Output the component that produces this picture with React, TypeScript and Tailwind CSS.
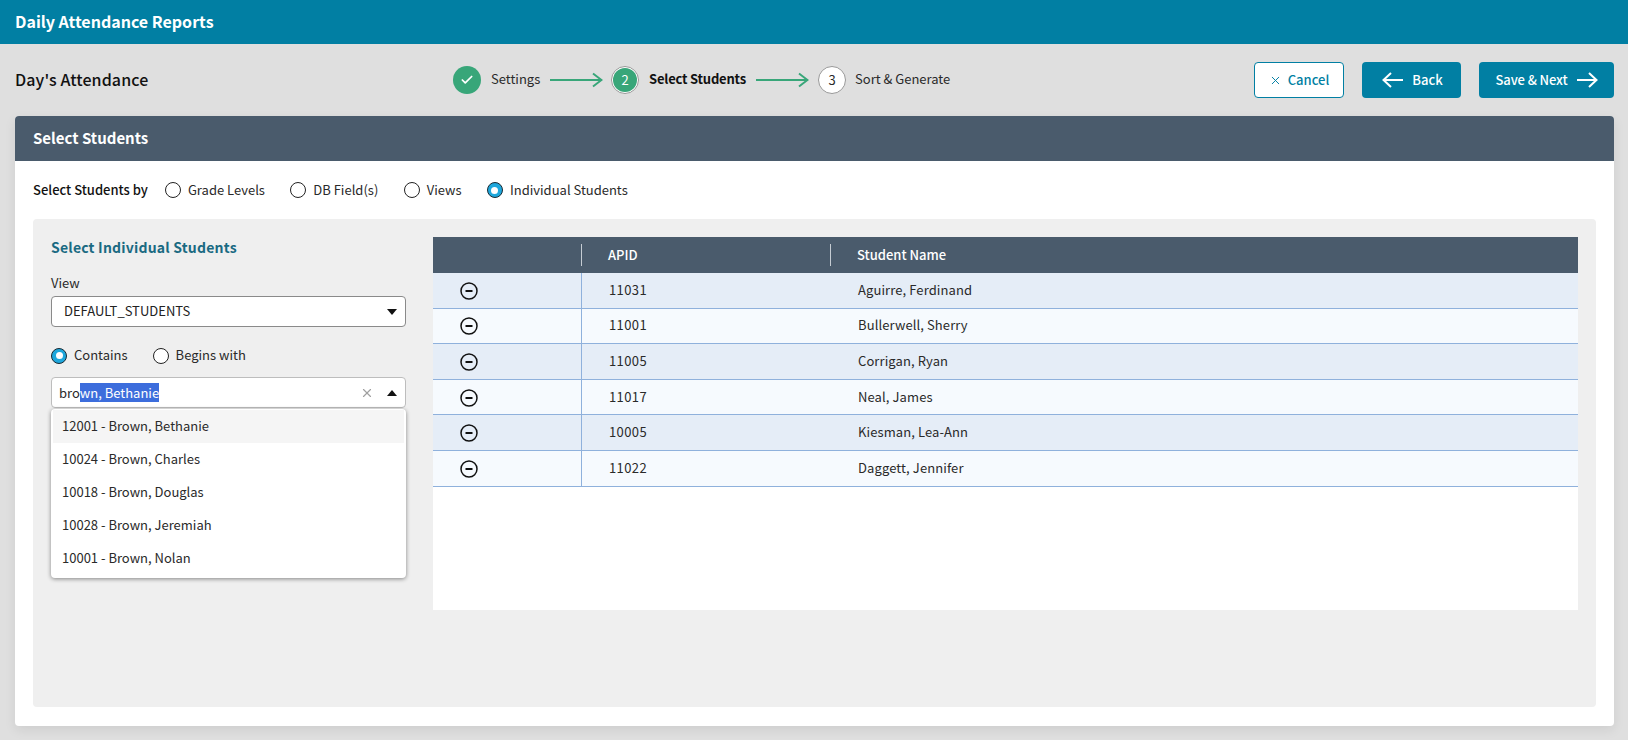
import { Check, X } from "lucide-react";

const FONT = "font-['Noto_Sans_CJK_SC','Source_Sans_Pro',sans-serif]";

const students = [
  { apid: "11031", name: "Aguirre, Ferdinand" },
  { apid: "11001", name: "Bullerwell, Sherry" },
  { apid: "11005", name: "Corrigan, Ryan" },
  { apid: "11017", name: "Neal, James" },
  { apid: "10005", name: "Kiesman, Lea-Ann" },
  { apid: "11022", name: "Daggett, Jennifer" },
];

const options = [
  "12001 - Brown, Bethanie",
  "10024 - Brown, Charles",
  "10018 - Brown, Douglas",
  "10028 - Brown, Jeremiah",
  "10001 - Brown, Nolan",
];

function Radio({ label, checked }: { label: string; checked?: boolean }) {
  return (
    <label className="flex items-center gap-[7px] text-[13px] leading-[20px] text-[#2a2a2a]">
      {checked ? (
        <span className="flex h-[16px] w-[16px] items-center justify-center rounded-full border-[1.5px] border-[#1a2a33] bg-[#1ea7dc]">
          <span className="h-[7px] w-[7px] rounded-full bg-white" />
        </span>
      ) : (
        <span className="h-[16px] w-[16px] rounded-full border-[1.5px] border-[#222] bg-white" />
      )}
      <span className="pb-[1px]">{label}</span>
    </label>
  );
}

function StepArrow() {
  return (
    <svg width="53" height="16" viewBox="0 0 53 16" fill="none" stroke="#38a679" strokeWidth="2" className="shrink-0">
      <path d="M0 8H51M43 1.5L51.5 8L43 14.5" />
    </svg>
  );
}

function BigArrow({ flip }: { flip?: boolean }) {
  return (
    <svg width="21" height="16" viewBox="0 0 21 16" fill="none" stroke="#fff" strokeWidth="2" className={`shrink-0 ${flip ? "rotate-180" : ""}`}>
      <path d="M0 8H19M12 1L19.5 8L12 15" />
    </svg>
  );
}

function RemoveIcon() {
  return (
    <svg width="18" height="18" viewBox="0 0 18 18" fill="none" stroke="#111" className="shrink-0">
      <circle cx="9" cy="9" r="8" strokeWidth="1.5" />
      <path d="M5.5 9H12.5" strokeWidth="2" />
    </svg>
  );
}

export default function App() {
  return (
    <div className={`${FONT} flex h-[740px] w-[1628px] flex-col overflow-hidden bg-[#dfdfdf] text-[13px]`}>
      <header className="flex h-[44px] shrink-0 items-center bg-[#017fa3] px-[15px] pb-[2px] text-[16px] leading-[24px] font-semibold text-white">
        Daily Attendance Reports
      </header>

      <div className="flex h-[72px] shrink-0 items-center pr-[14px] pl-[15px]">
        <h1 className="w-[438px] pb-[2px] text-[16px] leading-[24px] font-medium tracking-[0.1px] text-[#111]">Day's Attendance</h1>
        <div className="flex items-center text-[13px] leading-[20px]">
          <span className="flex h-[28px] w-[28px] items-center justify-center rounded-full bg-[#38a679] text-white">
            <Check size={14} strokeWidth={3} />
          </span>
          <span className="mr-[10px] ml-[10px] w-[49px] pb-[2px] text-[#2a2a2a]">Settings</span>
          <StepArrow />
          <span className="ml-[8px] flex h-[28px] w-[28px] items-center justify-center rounded-full border border-[#999] bg-white">
            <span className="flex h-[24px] w-[24px] items-center justify-center rounded-full bg-[#38a679] pb-[1px] text-white">2</span>
          </span>
          <span className="mr-[10px] ml-[10px] w-[97px] pb-[2px] font-semibold tracking-[-0.2px] whitespace-nowrap text-[#111]">Select Students</span>
          <StepArrow />
          <span className="ml-[9px] flex h-[28px] w-[28px] items-center justify-center rounded-full border border-[#999] bg-white pb-[1px] text-[#2a2a2a]">3</span>
          <span className="ml-[9px] pb-[2px] text-[#2a2a2a]">Sort &amp; Generate</span>
        </div>
        <div className="ml-auto flex items-center gap-[18px] text-[13px] leading-[20px] font-medium">
          <button className="flex h-[36px] w-[90px] items-center justify-center gap-[6px] rounded-[4px] border border-[#017fa3] bg-white text-[#017fa3]">
            <X size={13} strokeWidth={1.8} />
            <span className="pb-[1px]">Cancel</span>
          </button>
          <button className="flex h-[36px] w-[99px] items-center justify-center gap-[9px] rounded-[4px] bg-[#017fa3] pl-[2px] text-white">
            <BigArrow flip />
            <span className="pb-[1px]">Back</span>
          </button>
          <button className="flex h-[36px] w-[135px] items-center justify-center gap-[9px] rounded-[4px] bg-[#017fa3] text-white">
            <span className="pb-[1px] tracking-[-0.1px]">Save &amp; Next</span>
            <BigArrow />
          </button>
        </div>
      </div>

      <main className="mr-[14px] ml-[15px] flex h-[610px] flex-col rounded-[4px] bg-white shadow-[0_4px_12px_rgba(0,0,0,0.08)]">
        <div className="flex h-[45px] shrink-0 items-center rounded-t-[4px] bg-[#4a5b6c] px-[18px] pb-[2px] text-[15px] leading-[20px] font-semibold text-white">
          Select Students
        </div>

        <div className="flex h-[58px] shrink-0 items-center px-[18px]">
          <span className="mr-[17px] pb-[1px] text-[13px] leading-[20px] font-medium text-[#111]">Select Students by</span>
          <div className="flex items-center gap-[25.4px]">
            <Radio label="Grade Levels" />
            <Radio label="DB Field(s)" />
            <Radio label="Views" />
            <Radio label="Individual Students" checked />
          </div>
        </div>

        <section className="mx-[18px] flex h-[488px] gap-[27px] rounded-[4px] bg-[#efefef] p-[18px]">
          <div className="w-[355px] shrink-0">
            <h2 className="text-[14px] leading-[20px] font-semibold tracking-[0.2px] text-[#1a6a82]">Select Individual Students</h2>
            <div className="mt-[16px] text-[13px] leading-[20px] text-[#2a2a2a]">View</div>
            <div className="mt-[3px] flex h-[31px] items-center justify-between rounded-[4px] border border-[#8a8a8a] bg-white pr-[8px] pl-[12px] text-[13px] text-[#222]">
              <span className="pb-[1px]">DEFAULT_STUDENTS</span>
              <span className="h-0 w-0 border-x-[5px] border-t-[6px] border-x-transparent border-t-[#111]" />
            </div>
            <div className="mt-[18px] flex items-center gap-[25px]">
              <Radio label="Contains" checked />
              <Radio label="Begins with" />
            </div>
            <div className="relative mt-[11px]">
              <div className="flex h-[31px] items-center rounded-[4px] border border-[#bdbdbd] bg-white px-[7px] text-[13px] leading-[19px] text-[#2a2a2a]">
                <span>bro</span>
                <span className="bg-[#3c6ddc] text-white">wn, Bethanie</span>
                <X size={14} strokeWidth={2} className="mr-[13px] ml-auto text-[#a0a0a0]" />
                <span className="mr-[1px] h-0 w-0 border-x-[5px] border-b-[6px] border-x-transparent border-b-[#111]" />
              </div>
              <ul className="absolute top-[32px] left-0 w-full rounded-[4px] bg-white px-[2px] pt-[1px] pb-[3px] shadow-[0_1px_4px_rgba(0,0,0,0.45)]">
                {options.map((option, i) => (
                  <li
                    key={option}
                    className={`flex h-[33px] items-center px-[9px] pb-[1px] text-[13px] leading-[20px] text-[#2a2a2a] ${i === 0 ? "bg-[#f5f5f5]" : ""}`}
                  >
                    {option}
                  </li>
                ))}
              </ul>
            </div>
          </div>

          <div className="h-[373px] flex-1 bg-white">
            <div className="flex h-[36px] items-center bg-[#4a5b6c] text-[13px] leading-[20px] font-medium text-white">
              <div className="h-[22px] w-[149px] border-r border-[#c5ccd3]" />
              <div className="flex h-[22px] w-[249px] items-center border-r border-[#c5ccd3] pl-[26px]">APID</div>
              <div className="pl-[26px]">Student Name</div>
            </div>
            {students.map((student, i) => (
              <div
                key={student.apid}
                className={`flex h-[35.6px] items-center border-b border-[#8fb1dc] text-[13px] leading-[20px] text-[#2a2a2a] ${i % 2 === 0 ? "bg-[#e5edf7]" : "bg-[#f6fafe]"}`}
              >
                <div className="flex h-full w-[149px] items-center border-r border-[#8fb1dc] pt-[1px] pl-[27px]">
                  <RemoveIcon />
                </div>
                <div className="w-[249px] pb-[1px] pl-[27px] tracking-[0.4px]">{student.apid}</div>
                <div className="pb-[1px] pl-[27px] tracking-[0.1px]">{student.name}</div>
              </div>
            ))}
          </div>
        </section>
      </main>
    </div>
  );
}
